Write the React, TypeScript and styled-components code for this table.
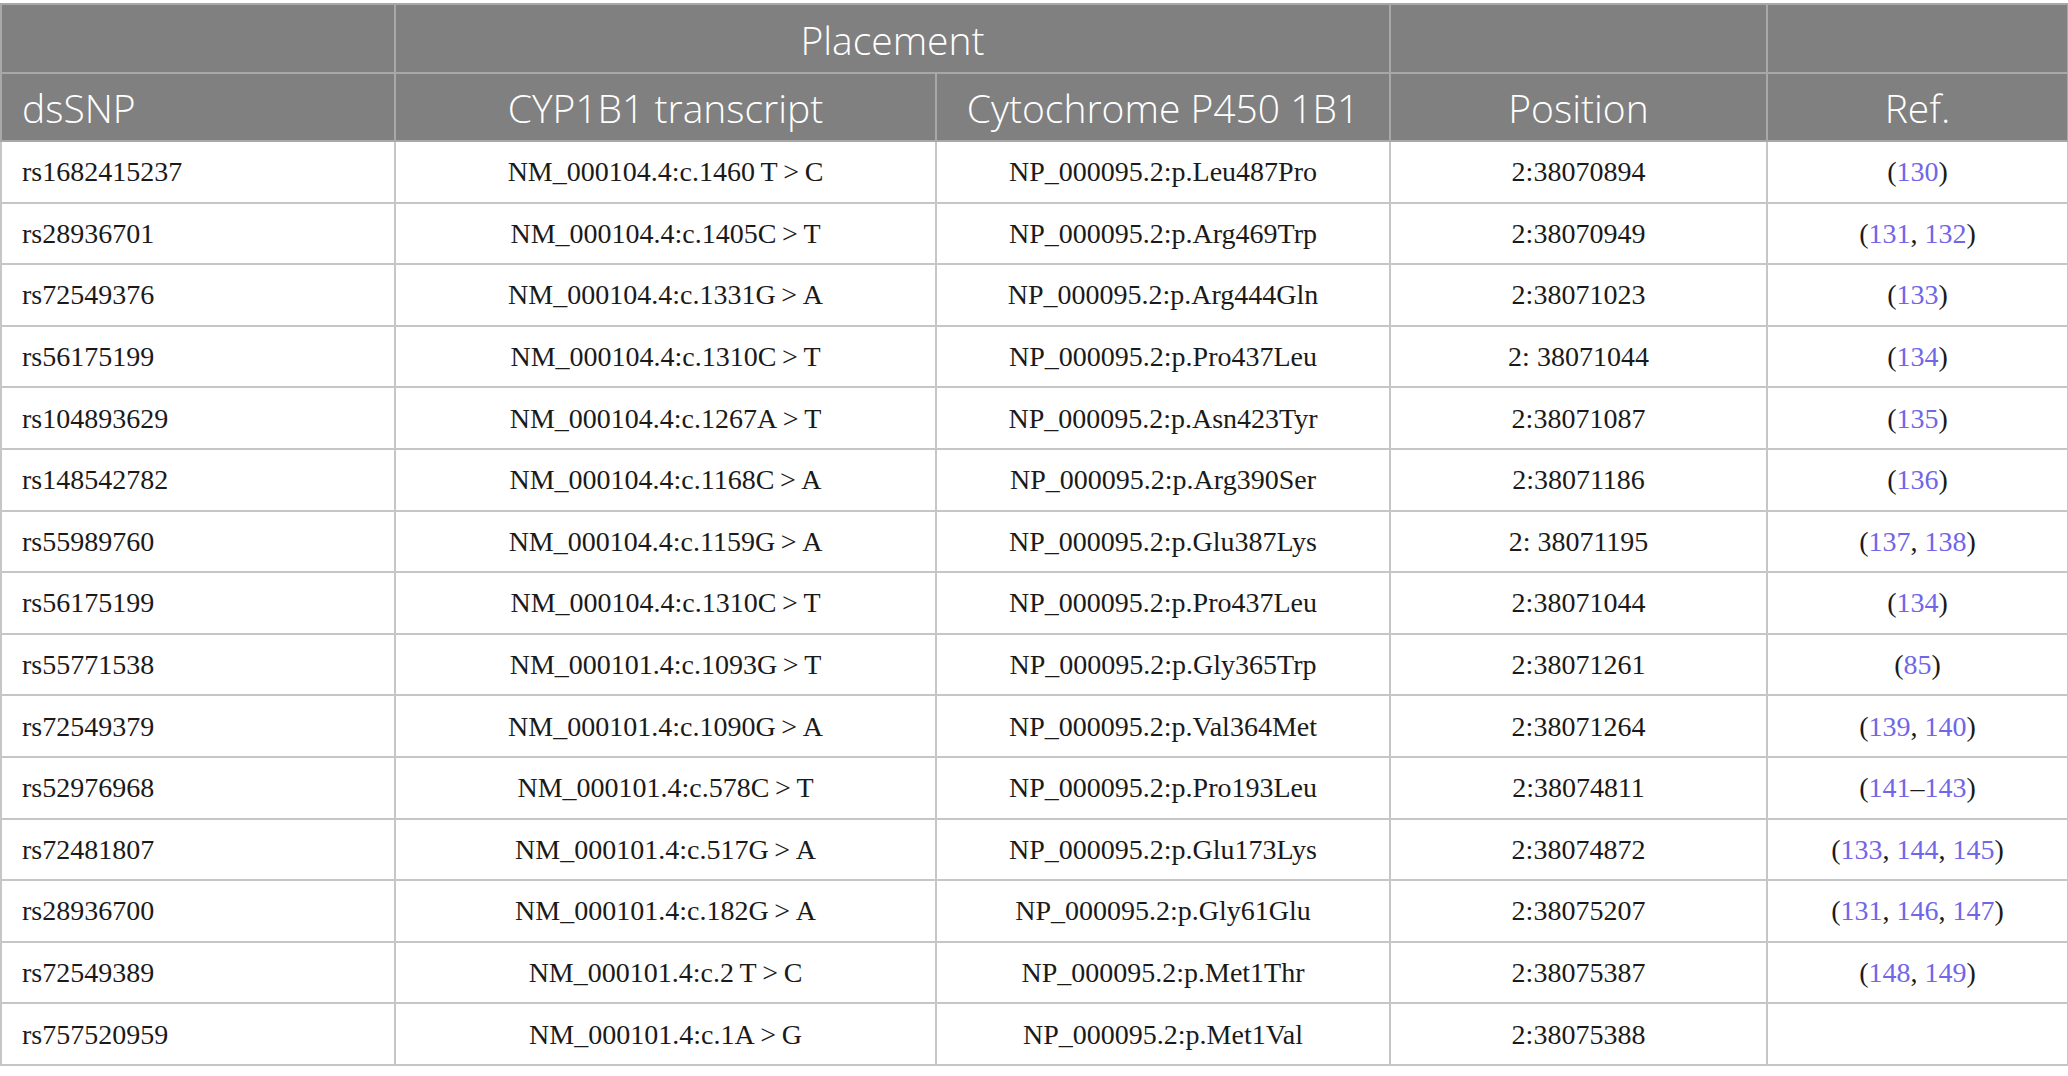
import React from "react";
import styled, { createGlobalStyle } from "styled-components";

const GlobalStyle = createGlobalStyle`
  html, body {
    margin: 0;
    padding: 0;
    background: #ffffff;
  }
  body {
    font-family: "Liberation Serif", "Times New Roman", serif;
  }
`;

const Page = styled.div`
  padding-top: 3px;
  width: 2068px;
`;

const Table = styled.table`
  width: 2067px;
  border-collapse: collapse;
  table-layout: fixed;
`;

const HeadCell = styled.th<{ $align?: "left" | "center" }>`
  background: #7f807f;
  color: #ffffff;
  font-family: "Open Sans", "Noto Sans", sans-serif;
  font-weight: 350;
  font-size: 39px;
  height: 64.5px;
  padding: 2px 20px 0;
  border: 2px solid #a7a8a7;
  text-align: ${(p) => p.$align ?? "center"};
  vertical-align: middle;
  white-space: nowrap;
`;

const Row = styled.tr`
  height: 61.6px;
`;

const Cell = styled.td<{ $align?: "left" | "center" }>`
  border: 2px solid #c6c6c6;
  padding: 1px 20px 0;
  font-family: "Liberation Serif", "Times New Roman", serif;
  font-size: 28px;
  color: #1a1a1a;
  text-align: ${(p) => p.$align ?? "center"};
  vertical-align: middle;
  white-space: nowrap;
`;

const RefLink = styled.a`
  color: #7166e8;
  text-decoration: none;
`;

type RefPart = number | "–" | ",";

interface DataRow {
  snp: string;
  transcript: string;
  protein: string;
  position: string;
  refs: RefPart[];
}

const t = "\u2009";

const rows: DataRow[] = [
  { snp: "rs1682415237", transcript: `NM_000104.4:c.1460${t}T${t}>${t}C`, protein: "NP_000095.2:p.Leu487Pro", position: "2:38070894", refs: [130] },
  { snp: "rs28936701", transcript: `NM_000104.4:c.1405C${t}>${t}T`, protein: "NP_000095.2:p.Arg469Trp", position: "2:38070949", refs: [131, ",", 132] },
  { snp: "rs72549376", transcript: `NM_000104.4:c.1331G${t}>${t}A`, protein: "NP_000095.2:p.Arg444Gln", position: "2:38071023", refs: [133] },
  { snp: "rs56175199", transcript: `NM_000104.4:c.1310C${t}>${t}T`, protein: "NP_000095.2:p.Pro437Leu", position: "2: 38071044", refs: [134] },
  { snp: "rs104893629", transcript: `NM_000104.4:c.1267A${t}>${t}T`, protein: "NP_000095.2:p.Asn423Tyr", position: "2:38071087", refs: [135] },
  { snp: "rs148542782", transcript: `NM_000104.4:c.1168C${t}>${t}A`, protein: "NP_000095.2:p.Arg390Ser", position: "2:38071186", refs: [136] },
  { snp: "rs55989760", transcript: `NM_000104.4:c.1159G${t}>${t}A`, protein: "NP_000095.2:p.Glu387Lys", position: "2: 38071195", refs: [137, ",", 138] },
  { snp: "rs56175199", transcript: `NM_000104.4:c.1310C${t}>${t}T`, protein: "NP_000095.2:p.Pro437Leu", position: "2:38071044", refs: [134] },
  { snp: "rs55771538", transcript: `NM_000101.4:c.1093G${t}>${t}T`, protein: "NP_000095.2:p.Gly365Trp", position: "2:38071261", refs: [85] },
  { snp: "rs72549379", transcript: `NM_000101.4:c.1090G${t}>${t}A`, protein: "NP_000095.2:p.Val364Met", position: "2:38071264", refs: [139, ",", 140] },
  { snp: "rs52976968", transcript: `NM_000101.4:c.578C${t}>${t}T`, protein: "NP_000095.2:p.Pro193Leu", position: "2:38074811", refs: [141, "–", 143] },
  { snp: "rs72481807", transcript: `NM_000101.4:c.517G${t}>${t}A`, protein: "NP_000095.2:p.Glu173Lys", position: "2:38074872", refs: [133, ",", 144, ",", 145] },
  { snp: "rs28936700", transcript: `NM_000101.4:c.182G${t}>${t}A`, protein: "NP_000095.2:p.Gly61Glu", position: "2:38075207", refs: [131, ",", 146, ",", 147] },
  { snp: "rs72549389", transcript: `NM_000101.4:c.2${t}T${t}>${t}C`, protein: "NP_000095.2:p.Met1Thr", position: "2:38075387", refs: [148, ",", 149] },
  { snp: "rs757520959", transcript: `NM_000101.4:c.1A${t}>${t}G`, protein: "NP_000095.2:p.Met1Val", position: "2:38075388", refs: [] },
];

function Refs({ refs }: { refs: RefPart[] }) {
  if (refs.length === 0) return null;
  return (
    <>
      (
      {refs.map((r, i) =>
        typeof r === "number" ? (
          <RefLink key={i} href="#">
            {r}
          </RefLink>
        ) : r === "," ? (
          <React.Fragment key={i}>, </React.Fragment>
        ) : (
          <React.Fragment key={i}>{r}</React.Fragment>
        )
      )}
      )
    </>
  );
}

export default function App() {
  return (
    <Page>
      <GlobalStyle />
      <Table>
        <colgroup>
          <col style={{ width: 394 }} />
          <col style={{ width: 541 }} />
          <col style={{ width: 454 }} />
          <col style={{ width: 377 }} />
          <col style={{ width: 301 }} />
        </colgroup>
        <thead>
          <tr>
            <HeadCell />
            <HeadCell colSpan={2}>Placement</HeadCell>
            <HeadCell />
            <HeadCell />
          </tr>
          <tr>
            <HeadCell $align="left">dsSNP</HeadCell>
            <HeadCell>CYP1B1 transcript</HeadCell>
            <HeadCell>Cytochrome P450 1B1</HeadCell>
            <HeadCell>Position</HeadCell>
            <HeadCell>Ref.</HeadCell>
          </tr>
        </thead>
        <tbody>
          {rows.map((r, i) => (
            <Row key={i}>
              <Cell $align="left">{r.snp}</Cell>
              <Cell>{r.transcript}</Cell>
              <Cell>{r.protein}</Cell>
              <Cell>{r.position}</Cell>
              <Cell>
                <Refs refs={r.refs} />
              </Cell>
            </Row>
          ))}
        </tbody>
      </Table>
    </Page>
  );
}
